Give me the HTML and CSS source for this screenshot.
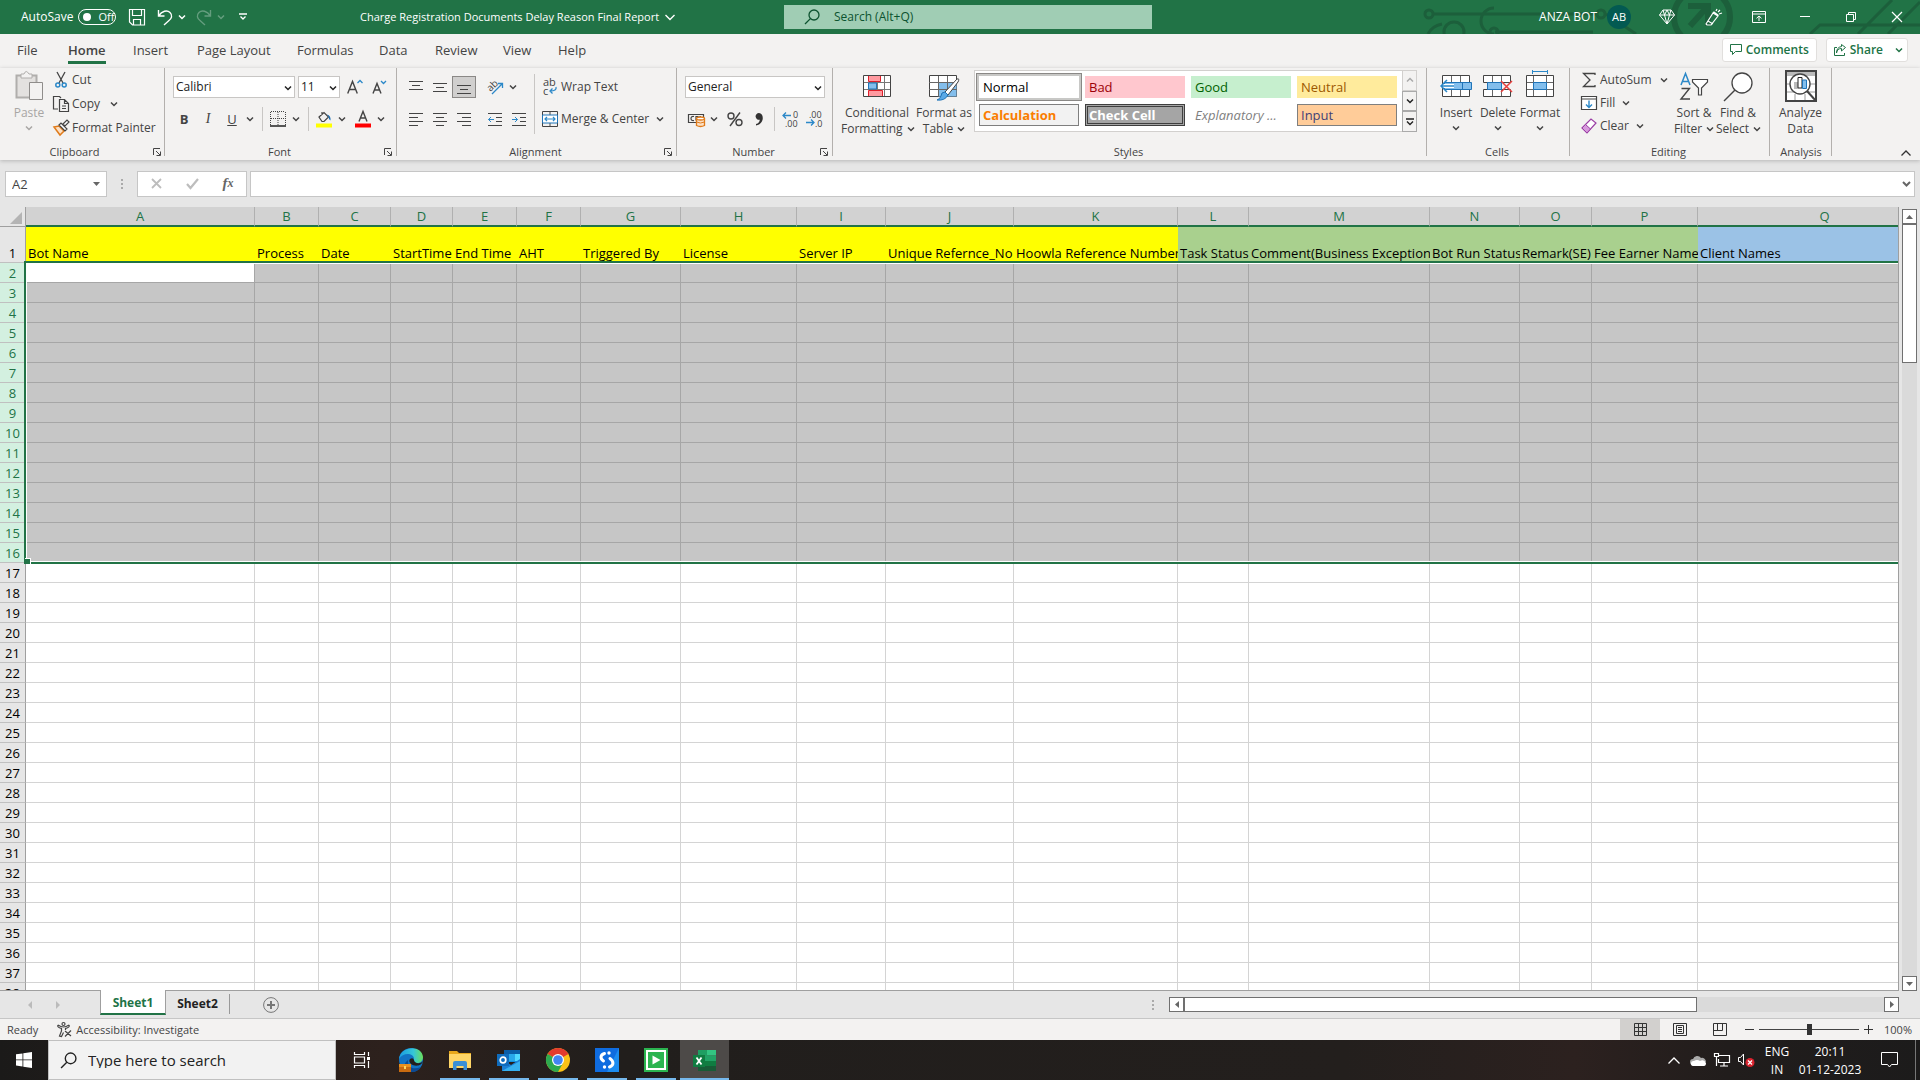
FILE: index.html
```html
<!DOCTYPE html>
<html lang="en">
<head>
<meta charset="utf-8">
<title>Charge Registration Documents Delay Reason Final Report - Excel</title>
<link rel="stylesheet" href="styles.css">
</head>
<body>
<svg class="sprite" aria-hidden="true">
  <symbol id="chev" viewBox="0 0 8 8"><path d="M1 2.5 4 5.5 7 2.5" fill="none" stroke="currentColor" stroke-width="1.5"/></symbol>
  <symbol id="launch" viewBox="0 0 8 8"><path d="M.5 7V.5H7M3 3l4 4M7.500 3.500v4h-4" fill="none" stroke="currentColor"/></symbol>
  <symbol id="lens" viewBox="0 0 16 16"><g fill="none" stroke="currentColor" stroke-width="1.300"><circle cx="10" cy="6" r="5"/><path d="M6.400 9.600 1 15"/></g></symbol>
</svg>

<header class="titlebar">
  <svg class="pattern" viewBox="0 0 500 34" aria-hidden="true"><g fill="none" stroke="#1c5f3b" stroke-width="3">
    <circle cx="9" cy="14" r="4"/><path d="M13 14h164M8 34q4-8 14-10M74 34a13 13 0 0 1 0-26M186 14l30 20M75 32h98"/>
    <circle cx="34" cy="32" r="10"/><circle cx="181" cy="14" r="4"/><circle cx="74" cy="32" r="4"/>
    <circle cx="282" cy="17" r="28" stroke-width="6"/><path d="M268 6h20v20M288 6l-18 20" stroke-width="6"/>
    <path d="M390 34l10-9h100M438 34l34-34M468 34l32-32"/></g></svg>
  <div class="quick">
    <label class="autosave">AutoSave <input type="checkbox"><span class="toggle"><i></i>Off</span></label>
    <button aria-label="Save"><svg width="16" height="17" viewBox="0 0 16 17"><path d="M.5.5h15v15.500h-12l-3-3zM3.500.5v6h9v-6M4.500 16v-5.500h7V16" fill="none" stroke="#fff" stroke-width="1.200"/></svg></button>
    <button aria-label="Undo"><svg width="16" height="17" viewBox="0 0 16 17"><path d="M1.500 1v6h6M1.500 7C5 2 10 .5 13 3.500s1.500 6-1 8L7 16" fill="none" stroke="#fff" stroke-width="1.400"/></svg></button>
    <button class="mini" aria-label="Undo list"><svg class="chev"><use href="#chev"/></svg></button>
    <button class="dim" aria-label="Redo"><svg width="16" height="17" viewBox="0 0 16 17"><path d="M14.500 1v6h-6M14.500 7C11 2 6 .5 3 3.500s-1.500 6 1 8L9 16" fill="none" stroke="#fff" stroke-width="1.400"/></svg></button>
    <button class="mini dim" aria-label="Redo list"><svg class="chev"><use href="#chev"/></svg></button>
    <button aria-label="Customize toolbar"><svg width="8" height="8" viewBox="0 0 8 8"><path d="M0 1h8M1.500 3.500 4 6l2.500-2.500" fill="none" stroke="#fff" stroke-width="1.300"/></svg></button>
  </div>
  <button class="doc">Charge Registration Documents Delay Reason Final Report <svg width="10" height="8" viewBox="0 0 10 8"><path d="M.5 2 5 6.500 9.500 2" fill="none" stroke="#fff" stroke-width="1.400"/></svg></button>
  <label class="search"><svg width="16" height="16"><use href="#lens"/></svg><input type="text" placeholder="Search (Alt+Q)" aria-label="Search"></label>
  <div class="account">
    <span>ANZA BOT</span><span class="avatar">AB</span>
    <button aria-label="Premium"><svg width="16" height="16" viewBox="0 0 16 16"><path d="M4 1h8l3.500 5L8 15 .5 6zM.5 6h15M4 1l1.500 5L8 15l2.500-9L12 1M5.500 6 8 1l2.500 5" fill="none" stroke="#fff"/></svg></button>
    <button aria-label="What's new"><svg width="17" height="17" viewBox="0 0 17 17"><path d="M1 15 8 4l5 3-7 9H2zM8 4l1-1 4 3v1M3 12l5 3M11 2l1-2M13 3l2-2M14 5l3-1" fill="none" stroke="#fff" stroke-width="1.200"/></svg></button>
    <button aria-label="Ribbon display"><svg width="14" height="12" viewBox="0 0 14 12"><path d="M.5.500h13v11H.5zM.5 3h13M7 10V5M4.500 7.300 7 5l2.500 2.300" fill="none" stroke="#fff"/></svg></button>
    <button aria-label="Minimize"><svg width="10" height="10" viewBox="0 0 10 10"><path d="M0 4.500h10" stroke="#fff"/></svg></button>
    <button aria-label="Restore"><svg width="10" height="10" viewBox="0 0 10 10"><path d="M.5 2.500h7v7h-7zM2.500 2.500v-2h7v7h-2" fill="none" stroke="#fff"/></svg></button>
    <button aria-label="Close"><svg width="10" height="10" viewBox="0 0 10 10"><path d="M0 0l10 10M10 0 0 10" stroke="#fff" stroke-width="1.200"/></svg></button>
  </div>
</header>

<nav class="tabs">
  <div class="tablist"><a href="#file">File</a><a href="#home" class="on">Home</a><a href="#insert">Insert</a><a href="#layout">Page Layout</a><a href="#formulas">Formulas</a><a href="#data">Data</a><a href="#review">Review</a><a href="#view">View</a><a href="#help">Help</a></div>
  <button class="pill"><svg width="12" height="11" viewBox="0 0 12 11"><path d="M.5.500h11v7h-6l-3 3v-3h-2z" fill="none" stroke="currentColor"/></svg>Comments</button>
  <button class="pill"><svg width="12" height="12" viewBox="0 0 12 12"><path d="M3 3.500H.5v8h10V9M2.500 9c.5-3 2-4.500 5-4.500V7l4-3.500L7.500.5v2C4 3 2.500 5.500 2.500 9z" fill="none" stroke="currentColor"/></svg>Share<svg class="chev"><use href="#chev"/></svg></button>
</nav>

<section class="ribbon">
  <div class="group g-clip">
    <div class="body">
      <button class="big dim2"><svg width="28" height="32" viewBox="0 0 28 32"><path d="M1.500 5.500h20v22h-20z" fill="#e3e1df" stroke="#b0aeac" stroke-width="2"/><path d="M6 8V4h3q2-5 5 0h3v4z" fill="#f3f2f1" stroke="#b0aeac"/><path d="M14.500 12.500h13v17h-13z" fill="#f3f2f1" stroke="#8f8d8b"/></svg>Paste<svg class="chev"><use href="#chev"/></svg></button>
      <div class="stack">
        <button><svg width="16" height="16" viewBox="0 0 16 16"><path d="M4 0l6 11M12 0 6 11" stroke="#444" stroke-width="1.300"/><g fill="none" stroke="#2b88c8" stroke-width="1.500"><circle cx="4.800" cy="13" r="2"/><circle cx="11.200" cy="13" r="2"/></g></svg>Cut</button>
        <button><svg width="16" height="16" viewBox="0 0 16 16"><path d="M5 13H.5V.5h6L8 2M6.500 3.500h5l4 4v8h-9zM11.500 3.500v4h4M9 10h4M9 12.500h4" fill="none" stroke="#444" stroke-width="1.200"/></svg>Copy<svg class="chev far"><use href="#chev"/></svg></button>
        <button><svg width="16" height="16" viewBox="0 0 16 16"><path d="M1 7l5-1 5 5-4 4z" fill="#fbe0c6" stroke="#e07b1a" stroke-width="1.500"/><path d="M6 5l2-2 6 6-2 2zM10 4l4-4 2 2-4 4z" fill="#fff" stroke="#444" stroke-width="1.200"/></svg>Format Painter</button>
      </div>
    </div>
    <div class="foot"><span>Clipboard</span><button aria-label="Clipboard settings"><svg class="chev"><use href="#launch"/></svg></button></div>
  </div>

  <div class="group g-font">
    <div class="rows">
      <div class="line"><div class="sel w-font"><select aria-label="Font"><option>Calibri</option></select><svg class="chev"><use href="#chev"/></svg></div><div class="sel w-size"><select aria-label="Font size"><option>11</option></select><svg class="chev"><use href="#chev"/></svg></div>
        <button class="t grow" aria-label="Increase font size"><svg width="16" height="16" viewBox="0 0 16 16"><path d="M.7 14.500 5.500 2.500l4.800 12M2.400 10.500h6.300" fill="none" stroke="#444" stroke-width="1.400"/><path d="M10.500 4 13 1.500 15.500 4" fill="none" stroke="#2b88c8" stroke-width="1.300"/></svg></button>
        <button class="t" aria-label="Decrease font size"><svg width="16" height="16" viewBox="0 0 16 16"><path d="M2 14.500 6 4.500l4 10M3.500 11h5" fill="none" stroke="#444" stroke-width="1.400"/><path d="M10 2l2.500 2.500L15 2" fill="none" stroke="#2b88c8" stroke-width="1.300"/></svg></button></div>
      <div class="line r2"><button class="t b">B</button><button class="t i">I</button><button class="t u">U</button><button class="c"><svg class="chev"><use href="#chev"/></svg></button><hr>
        <button class="t" aria-label="Borders"><svg width="16" height="16" viewBox="0 0 16 16"><path d="M1 .5h14M.5 1v13M15.500 1v13M1 7.500h14M8 1v13" stroke="#444" stroke-dasharray="1 1" fill="none"/><path d="M0 15h16" stroke="#222" stroke-width="1.500"/></svg></button><button class="c"><svg class="chev"><use href="#chev"/></svg></button><hr>
        <button class="t" aria-label="Fill color"><svg width="16" height="17" viewBox="0 0 16 17"><path d="M0 12.500h16v4H0z" fill="#ff0"/><path d="M3 6l5-4.500L12.500 6 8 10.500H6zM6 4V1" fill="none" stroke="#444" stroke-width="1.200"/><path d="M11 3.500q4 1 3.500 6-2-1-2-4z" fill="#1b6fb5"/></svg></button><button class="c"><svg class="chev"><use href="#chev"/></svg></button>
        <button class="t near" aria-label="Font color"><svg width="16" height="17" viewBox="0 0 16 17"><path d="M0 12.500h16v4H0z" fill="#f00"/><path d="M4 10.500 8 .5l4 10M5.500 7h5" fill="none" stroke="#444" stroke-width="1.400"/></svg></button><button class="c"><svg class="chev"><use href="#chev"/></svg></button></div>
    </div>
    <div class="foot"><span>Font</span><button aria-label="Font settings"><svg class="chev"><use href="#launch"/></svg></button></div>
  </div>

  <div class="group g-align">
    <div class="body">
      <div class="rows al">
        <div class="line"><button class="t" aria-label="Top align"><svg class="ic" viewBox="0 0 16 16"><path d="M1 2.500h14M4 6.500h8M1 10.500h14"/></svg></button><button class="t" aria-label="Middle align"><svg class="ic" viewBox="0 0 16 16"><path d="M1 4.500h14M4 8.500h8M1 12.500h14"/></svg></button><button class="t pressed" aria-label="Bottom align"><svg class="ic" viewBox="0 0 16 16"><path d="M1 6.500h14M4 10.500h8M1 14.500h14"/></svg></button>
          <button class="t gap7" aria-label="Orientation"><svg width="16" height="16" viewBox="0 0 16 16"><text x="-1" y="10" transform="rotate(-45 5 6)" font-size="10" fill="#444">ab</text><path d="M5 15 15 5M11 4.500h4.500V9" fill="none" stroke="#2b88c8" stroke-width="1.300"/></svg></button><button class="c"><svg class="chev"><use href="#chev"/></svg></button></div>
        <div class="line r2"><button class="t" aria-label="Align left"><svg class="ic" viewBox="0 0 16 16"><path d="M1 2.500h14M1 6.500h9M1 10.500h14M1 14.500h9"/></svg></button><button class="t" aria-label="Center"><svg class="ic" viewBox="0 0 16 16"><path d="M1 2.500h14M4 6.500h8M1 10.500h14M4 14.500h8"/></svg></button><button class="t" aria-label="Align right"><svg class="ic" viewBox="0 0 16 16"><path d="M1 2.500h14M6 6.500h9M1 10.500h14M6 14.500h9"/></svg></button>
          <button class="t gap7" aria-label="Decrease indent"><svg class="ic" viewBox="0 0 16 16"><path d="M1 2.500h14M9 6.500h6M9 10.500h6M1 14.500h14"/><path d="M7 8.500H1.500M4 6 1.500 8.500 4 11" stroke="#2b88c8"/></svg></button><button class="t" aria-label="Increase indent"><svg class="ic" viewBox="0 0 16 16"><path d="M1 2.500h14M9 6.500h6M9 10.500h6M1 14.500h14"/><path d="M1 8.500h5.500M4 6l2.500 2.500L4 11" stroke="#2b88c8"/></svg></button></div>
      </div>
      <hr class="tall">
      <div class="rows wr">
        <div class="line"><button class="w"><svg width="16" height="16" viewBox="0 0 16 16"><text x="1" y="7" font-size="11" fill="#444">ab</text><text x="1" y="16" font-size="11" fill="#444">c</text><path d="M14 8q1 4-6 4M10.500 9.500 8 12l2.500 2.500" fill="none" stroke="#2b88c8" stroke-width="1.300"/></svg>Wrap Text</button></div>
        <div class="line r2"><button class="w"><svg width="16" height="16" viewBox="0 0 16 16"><path d="M.5.500h15v15H.5zM8 .5V4M8 12v3.500" fill="none" stroke="#444"/><path d="M.5 4h15v8H.5z" fill="#fff" stroke="#1f74b8"/><path d="M3 8h10M5 6 3 8l2 2M11 6l2 2-2 2" fill="none" stroke="#2b88c8" stroke-width="1.200"/></svg>Merge &amp; Center</button><button class="c"><svg class="chev"><use href="#chev"/></svg></button></div>
      </div>
    </div>
    <div class="foot"><span>Alignment</span><button aria-label="Alignment settings"><svg class="chev"><use href="#launch"/></svg></button></div>
  </div>

  <div class="group g-num">
    <div class="rows">
      <div class="line"><div class="sel w-num"><select aria-label="Number format"><option>General</option></select><svg class="chev"><use href="#chev"/></svg></div></div>
      <div class="line r2"><button class="t" aria-label="Accounting format"><svg width="17" height="16" viewBox="0 0 17 16"><path d="M.5 3.500h15v8H.5zM6 5.500q-3-.5-3 2t3 2M8 9.500v-4h2v2H8M13 5.500h-1v3" fill="none" stroke="#444" stroke-width="1.200"/><path d="M8.500 7.500v7q4 2 8 0v-7" fill="#fbe0c6" stroke="#e07b1a" stroke-width="1.300"/><ellipse cx="12.500" cy="7.500" rx="4" ry="1.500" fill="#fff" stroke="#e07b1a" stroke-width="1.300"/><path d="M8.500 11q4 2 8 0" fill="none" stroke="#e07b1a"/></svg></button><button class="c"><svg class="chev"><use href="#chev"/></svg></button>
        <button class="t pct" aria-label="Percent"><svg width="16" height="16" viewBox="0 0 16 16"><g fill="none" stroke="#444" stroke-width="1.400"><circle cx="4" cy="5" r="3"/><circle cx="12" cy="11.500" r="3"/><path d="M13 1.500 3 15"/></g></svg></button><button class="t" aria-label="Comma"><svg width="16" height="16" viewBox="0 0 16 16"><path d="M8 2a3.400 3.400 0 1 0 .8 6.700Q8.500 12 5 13v1.500c9-2 8-12.500 3-12.500z" fill="#333"/></svg></button><hr>
        <button class="t" aria-label="Increase decimal"><svg width="16" height="16" viewBox="0 0 16 16"><path d="M9 4.500H1M4 1.500l-3 3 3 3" fill="none" stroke="#2b88c8" stroke-width="1.300"/><text x="11" y="7" font-size="9" fill="#444">0</text><text x="3" y="16" font-size="9" fill="#444">.00</text></svg></button><button class="t" aria-label="Decrease decimal"><svg width="16" height="16" viewBox="0 0 16 16"><path d="M0 11.500h8M5 8.500l3 3-3 3" fill="none" stroke="#2b88c8" stroke-width="1.300"/><text x="3" y="7" font-size="9" fill="#444">.00</text><text x="9" y="16" font-size="9" fill="#444">.0</text></svg></button></div>
    </div>
    <div class="foot"><span>Number</span><button aria-label="Number settings"><svg class="chev"><use href="#launch"/></svg></button></div>
  </div>

  <div class="group g-sty">
    <div class="body">
      <button class="big"><svg width="28" height="32" viewBox="0 2 28 32"><path d="M.5 7.500h27v21H.5z" fill="#fff"/><path d="M0 14.500h28M0 21.500h28M7.500 8v20M14.500 8v20M21.500 8v20" stroke="#777"/><path d="M5.500 7.500h12v6h-12zM5.500 22.500h14v6h-14z" fill="#ff9aa0" stroke="#e0202b"/><path d="M5.500 15h8v6h-8z" fill="#83beec" stroke="#1f74b8"/><path d="M.5 7.500h27v21H.5z" fill="none" stroke="#444"/></svg>Conditional<br>Formatting<svg class="chev in"><use href="#chev"/></svg></button>
      <button class="big fmt"><svg width="30" height="32" viewBox="0 2 30 32"><path d="M.5 7.500h27v21H.5z" fill="#fff" stroke="#444"/><path d="M9.500 14.500h18v14h-18z" fill="#83beec"/><path d="M0 14.500h28M0 21.500h28M9.500 8v20M18.500 8v20" stroke="#666"/><path d="M16 24 28 11q3-1 1 3L19 27z" fill="#fff" stroke="#444"/><path d="M8 32q8 1 11-5l-3-3q-4 0-4 4-1 3-4 4z" fill="#5aa9e6" stroke="#1f74b8"/></svg>Format as<br>Table<svg class="chev in"><use href="#chev"/></svg></button>
      <div class="gallery">
        <div class="cells"><button class="s normal">Normal</button><button class="s bad">Bad</button><button class="s good">Good</button><button class="s neutral">Neutral</button><button class="s calc">Calculation</button><button class="s check">Check Cell</button><button class="s expl">Explanatory ...</button><button class="s inp">Input</button></div>
        <div class="gscroll"><button class="off" aria-label="Scroll up"><svg class="chev flip"><use href="#chev"/></svg></button><button aria-label="Scroll down"><svg class="chev"><use href="#chev"/></svg></button><button aria-label="More styles"><svg width="8" height="8" viewBox="0 0 8 8"><path d="M0 1h8M1 3.500l3 3 3-3" fill="none" stroke="#222" stroke-width="1.400"/></svg></button></div>
      </div>
    </div>
    <div class="foot"><span>Styles</span></div>
  </div>

  <div class="group g-cells">
    <div class="body">
      <button class="big"><svg width="32" height="32" viewBox="0 2 32 32"><path d="M2.500 7.500h27v21h-27z" fill="#fff" stroke="#444"/><path d="M11.500 8v20M20.500 8v20" stroke="#666"/><path d="M4.500 14.500h27v7h-27z" fill="#83beec" stroke="#1f74b8"/><path d="M22.500 14v7" stroke="#1f74b8"/><path d="M0 18h14" stroke="#fff" stroke-width="4"/><path d="M14 18H1M7 12l-6 6 6 6" fill="none" stroke="#2b88c8" stroke-width="1.500"/></svg>Insert<svg class="chev"><use href="#chev"/></svg></button>
      <button class="big"><svg width="30" height="32" viewBox="0 2 30 32"><path d="M.5 14.500v-7h27v7zM.5 21.500v7h27v-7z" fill="#fff" stroke="#444"/><path d="M9.500 8v6M18.500 8v6M9.500 22v6M18.500 22v6" stroke="#666"/><path d="M4.500 14.500h14v7h-14z" fill="#83beec" stroke="#1f74b8"/><path d="M18 13l11 11M29 13 18 24" stroke="#e8403f" stroke-width="1.500"/></svg>Delete<svg class="chev"><use href="#chev"/></svg></button>
      <button class="big"><svg width="28" height="32" viewBox="0 2 28 32"><path d="M.5 7.500h27v21H.5z" fill="#fff"/><path d="M0 14.500h28M0 21.500h28M7.500 8v20M20.500 8v20" stroke="#666"/><path d="M7.500 14.500h13v7h-13z" fill="#83beec" stroke="#1f74b8"/><path d="M.5 7.500h27v21H.5z" fill="none" stroke="#444"/><path d="M6.500 2v4M21.500 2v4M7 3.500h14" stroke="#2b88c8"/></svg>Format<svg class="chev"><use href="#chev"/></svg></button>
    </div>
    <div class="foot"><span>Cells</span></div>
  </div>

  <div class="group g-edit">
    <div class="body">
      <div class="stack">
        <button><svg width="16" height="16" viewBox="0 0 16 16"><path d="M14 3V1.500H2.500L9 8l-6.500 6.500H14V13" fill="none" stroke="#444" stroke-width="1.300"/></svg>AutoSum<svg class="chev far"><use href="#chev"/></svg></button>
        <button><svg width="16" height="16" viewBox="0 0 16 16"><path d="M.5 1.500h15v13H.5zM.5 4h15" fill="#fff" stroke="#444" stroke-width="1.200"/><path d="M8 5.500v7M5 9.500l3 3 3-3" fill="none" stroke="#2b88c8" stroke-width="1.400"/></svg>Fill<svg class="chev in"><use href="#chev"/></svg></button>
        <button><svg width="16" height="16" viewBox="0 0 16 16"><path d="M1 10 10 1l5 4-9 10z" fill="#fff" stroke="#9b3fa5" stroke-width="1.200"/><path d="M1 10l3.500-3.500 5 4.500L6 15z" fill="#d79add" stroke="#9b3fa5"/></svg>Clear<svg class="chev in"><use href="#chev"/></svg></button>
      </div>
      <button class="big"><svg width="28" height="32" viewBox="0 0 28 32"><path d="M1 15 5.500 3.500 10 15M2.500 11.500h6" fill="none" stroke="#2b88c8" stroke-width="1.500"/><path d="M1.500 18.500h8L1 29h9" fill="none" stroke="#444" stroke-width="1.400"/><path d="M12.500 9.500h15v2.500l-6 6v7h-3v-7l-6-6z" fill="#fff" stroke="#444" stroke-width="1.200"/></svg>Sort &amp;<br>Filter<svg class="chev in"><use href="#chev"/></svg></button>
      <button class="big"><svg width="30" height="32" viewBox="0 1 30 32"><circle cx="19" cy="14" r="10" fill="#fff" stroke="#444" stroke-width="1.300"/><path d="M12 21 1 32" stroke="#444" stroke-width="1.500"/></svg>Find &amp;<br>Select<svg class="chev in"><use href="#chev"/></svg></button>
    </div>
    <div class="foot"><span>Editing</span></div>
  </div>

  <div class="group g-ana">
    <div class="body">
      <button class="big"><svg width="32" height="32" viewBox="0 0 32 32"><path d="M1 1h30v30H1z" fill="#fff" stroke="#444" stroke-width="2"/><path d="M2 2h28v4H2z" fill="#bbb"/><path d="M2 14h28M2 22h28M10 24v6M20 24v6" stroke="#999"/><circle cx="15" cy="14" r="10" fill="#fff" stroke="#444" stroke-width="1.400"/><path d="M22 21l9 10" stroke="#444" stroke-width="2"/><path d="M9 12h4v7H9z" fill="#bbb"/><path d="M13 7.500h4V18h-4z" fill="#fff" stroke="#222"/><path d="M17.500 10h4v8.500h-4z" fill="#83beec" stroke="#1f74b8"/></svg>Analyze<br>Data</button>
    </div>
    <div class="foot"><span>Analysis</span></div>
  </div>
  <button class="collapse" aria-label="Collapse ribbon"><svg width="10" height="8" viewBox="0 0 10 8"><path d="M.5 6.500 5 2l4.500 4.500" fill="none" stroke="#333" stroke-width="1.300"/></svg></button>
</section>

<section class="formula">
  <label class="namebox"><input type="text" value="A2" aria-label="Name box"><svg width="7" height="4" viewBox="0 0 7 4"><path d="M0 0h7L3.500 4z" fill="#666"/></svg></label>
  <span class="dots"><i></i><i></i><i></i></span>
  <div class="fx"><button aria-label="Cancel"><svg width="11" height="11" viewBox="0 0 11 11"><path d="M1 1l9 9M10 1l-9 9" stroke="#bdbdbd" stroke-width="1.800"/></svg></button><button aria-label="Enter"><svg width="13" height="11" viewBox="0 0 13 11"><path d="M1 6l3.500 4L12 1" fill="none" stroke="#bdbdbd" stroke-width="2.200"/></svg></button><button class="fn" aria-label="Insert function">f<small>x</small></button></div>
  <label class="finput"><input type="text" aria-label="Formula bar"><svg width="9" height="8" viewBox="0 0 9 8"><path d="M1 2l3.500 3.500L8 2" fill="none" stroke="#666" stroke-width="2"/></svg></label>
</section>

<main class="work">
  <div class="grid">
    <table>
      <colgroup><col class="c-n"><col class="c-a"><col class="c-b"><col class="c-c"><col class="c-d"><col class="c-b"><col class="c-b"><col class="c-g"><col class="c-h"><col class="c-i"><col class="c-j"><col class="c-k"><col class="c-l"><col class="c-m"><col class="c-o"><col class="c-c"><col class="c-p"><col class="c-q"></colgroup>
      <thead><tr><th class="corner"><svg width="12" height="12" viewBox="0 0 12 12"><path d="M12 0v12H0z" fill="#b4b4b4"/></svg></th><th>A</th><th>B</th><th>C</th><th>D</th><th>E</th><th>F</th><th>G</th><th>H</th><th>I</th><th>J</th><th>K</th><th>L</th><th>M</th><th>N</th><th>O</th><th>P</th><th>Q</th></tr></thead>
      <tbody id="rows"><tr class="head"><th>1</th><td>Bot Name</td><td>Process</td><td>Date</td><td>StartTime</td><td>End Time</td><td>AHT</td><td>Triggered By</td><td>License</td><td>Server IP</td><td>Unique Refernce_No</td><td>Hoowla Reference Number</td><td class="gr">Task Status</td><td class="gr">Comment(Business Exception)</td><td class="gr">Bot Run Status</td><td class="gr">Remark(SE)</td><td class="gr">Fee Earner Name</td><td class="bl">Client Names</td></tr></tbody>
    </table>
    <div class="selection"><i></i></div>
  </div>
  <div class="vscroll"><button aria-label="Scroll up"><svg width="7" height="4" viewBox="0 0 7 4"><path d="M0 4h7L3.500 0z" fill="#666"/></svg></button><span class="thumb"></span><span class="track"></span><button aria-label="Scroll down"><svg width="7" height="4" viewBox="0 0 7 4"><path d="M0 0h7L3.500 4z" fill="#666"/></svg></button></div>
</main>

<section class="sheets">
  <div class="nav"><button aria-label="Previous sheet"><svg width="4" height="8" viewBox="0 0 4 8"><path d="M4 0v8L0 4z" fill="#bbb"/></svg></button><button aria-label="Next sheet"><svg width="4" height="8" viewBox="0 0 4 8"><path d="M0 0v8l4-4z" fill="#bbb"/></svg></button></div>
  <button class="sheet on">Sheet1</button><button class="sheet">Sheet2</button>
  <button class="add" aria-label="New sheet"><svg width="16" height="16" viewBox="0 0 16 16"><circle cx="8" cy="8" r="7.400" fill="none" stroke="#777"/><path d="M8 4v8M4 8h8" stroke="#777" stroke-width="2"/></svg></button>
  <span class="dots push"><i></i><i></i><i></i></span>
  <div class="hscroll"><button aria-label="Scroll left"><svg width="4" height="7" viewBox="0 0 4 7"><path d="M4 0v7L0 3.500z" fill="#666"/></svg></button><span class="thumb"></span><span class="track"></span><button aria-label="Scroll right"><svg width="4" height="7" viewBox="0 0 4 7"><path d="M0 0v7l4-3.500z" fill="#666"/></svg></button></div>
</section>

<footer class="status">
  <span>Ready</span>
  <button class="acc"><svg width="15" height="15" viewBox="0 0 15 15"><g fill="none" stroke="#444" stroke-width="1.200"><circle cx="6.500" cy="2" r="1.500"/><path d="M1 3q-1 2 2 3l1.500.5V9L2.500 14l2 .5 2-4M12 3q1 2-2 3l-1.500.5V8M1 3q3 2 5.500 2T12 3M8 9l6 5M14 8.500l-6 6"/></g></svg>Accessibility: Investigate</button>
  <div class="views"><button class="on" aria-label="Normal"><svg width="13" height="13" viewBox="0 0 13 13"><path d="M.5.500h12v12H.5zM4.500 0v13M8.500 0v13M0 4.500h13M0 8.500h13" fill="none" stroke="#333"/></svg></button><button aria-label="Page layout"><svg width="14" height="13" viewBox="0 0 14 13"><path d="M.5.500h13v12H.5zM3.500 2.500h7v8h-7zM5 4.500h4M5 6.500h4M5 8.500h4" fill="none" stroke="#333"/></svg></button><button aria-label="Page break"><svg width="14" height="13" viewBox="0 0 14 13"><path d="M.5.500h13v12H.5zM4.500 0v7.500M9.500 0v7.500H.5" fill="none" stroke="#333"/></svg></button></div>
  <div class="zoom"><button aria-label="Zoom out"><svg width="9" height="9" viewBox="0 0 9 9"><path d="M0 4.500h9" stroke="#333"/></svg></button><input type="range" min="0" max="100" value="50" aria-label="Zoom"><button aria-label="Zoom in"><svg width="9" height="9" viewBox="0 0 9 9"><path d="M0 4.500h9M4.500 0v9" stroke="#333"/></svg></button><span>100%</span></div>
</footer>

<div class="taskbar">
  <button class="start" aria-label="Start"><svg width="16" height="16" viewBox="0 0 16 16"><path d="M0 2.300 6.500 1.400v6.100H0zM7.300 1.300 16 0v7.500H7.300zM0 8.300h6.500v6.200L0 13.600zM7.300 8.300H16V16l-8.700-1.300z" fill="#fff"/></svg></button>
  <label class="tsearch"><svg width="17" height="17"><use href="#lens"/></svg><input type="text" placeholder="Type here to search" aria-label="Search Windows"></label>
  <div class="apps">
    <button aria-label="Task view"><svg width="16" height="16" viewBox="0 0 16 16"><path d="M.5 0v2.500h10V0M.5 5h10v6H.5zM.5 16v-2.500h10V16M14.500 0v4M14.500 9v7" fill="none" stroke="#fff" stroke-width="1.200"/><path d="M13 5h3v3h-3z" fill="#fff"/></svg></button>
    <button aria-label="Edge"><svg width="24" height="24" viewBox="0 0 24 24"><defs><linearGradient id="eg" x1="0" x2="1"><stop offset="0" stop-color="#1a9be0"/><stop offset=".6" stop-color="#35c6d8"/><stop offset="1" stop-color="#6be05a"/></linearGradient></defs><circle cx="12" cy="12" r="12" fill="#1273c4"/><path d="M0 11C1-2 23-4 24 9c0 6-6 7-9 6-2-1 0-2 0-4 0-6-11-7-15 0z" fill="url(#eg)"/><path d="M9 12c-1 8 6 10 13 7-3 5-9 6-14 4-4-3-3-8 1-11z" fill="#0c4a94"/><path d="M11 11q3-2 4 1c0 3 6 5 9 1-1 5-8 6-12 3-2-2-2-4-1-5z" fill="#241f1d"/><path d="M0 16h12v8H0z" fill="#c96b10"/><path d="M0 16h12v3H0z" fill="#e8901e"/><path d="M5 18h2v3H5z" fill="#ffd25a"/></svg></button>
    <button class="run" aria-label="File Explorer"><svg width="22" height="20" viewBox="0 0 22 20"><path d="M0 1h8l2 2h12v15H0z" fill="#e8a81c"/><path d="M0 4h22v14H0z" fill="#ffd667"/><path d="M4 20v-7q0-2 2-2h10q2 0 2 2v7h-3.500v-4h-7v4z" fill="#3a8fd6"/></svg></button>
    <button class="run" aria-label="Outlook"><svg width="24" height="23" viewBox="0 0 24 23"><path d="M7 1h16v12H7z" fill="#1490df"/><path d="M12 4h6v8h-6z" fill="#28a8ea"/><path d="M18 4h5v8h-5z" fill="#50d9ff"/><path d="M7 1h16v4H7z" fill="#0a5ea8"/><path d="M5 10l9 6 9-6v12H5z" fill="#1b7fd4"/><path d="M5 22 23 12v10z" fill="#36b1f0"/><path d="M0 5h12v12H0z" fill="#0f6cbd"/><circle cx="6" cy="11" r="2.800" fill="none" stroke="#fff" stroke-width="1.700"/></svg></button>
    <button class="run" aria-label="Chrome"><svg width="24" height="24" viewBox="0 0 24 24"><circle cx="12" cy="12" r="12" fill="#fbc116"/><path d="M12 12 1.600 6A12 12 0 0 1 22.400 6z" fill="#e33b2e"/><path d="M12 12 1.600 6A12 12 0 0 0 12 24l5-9z" fill="#2da94f"/><circle cx="12" cy="12" r="6" fill="#fff"/><circle cx="12" cy="12" r="4.800" fill="#4285f4"/></svg></button>
    <button class="run" aria-label="Automation studio"><svg width="24" height="24" viewBox="0 0 24 24"><path d="M0 0h24v24H0z" fill="#0f6ce0"/><path d="M24 0v24H12z" fill="#1c8cf0"/><path d="M9.500 5.500C5 7 5 10.500 8.500 13M14.500 19c4.500-1.500 4.500-5.500.5-8.500" fill="none" stroke="#fff" stroke-width="3" stroke-linecap="round"/><circle cx="14" cy="5" r="1.700" fill="#fff"/><circle cx="9.500" cy="19" r="1.700" fill="#fff"/></svg></button>
    <button class="run" aria-label="Player"><svg width="24" height="24" viewBox="0 0 24 24"><path d="M0 0h24v24H0z" fill="#2bb450"/><path d="M3 3h18v18H3z" fill="none" stroke="#fff" stroke-width="2"/><path d="M8.500 7.500v9l8-4.500z" fill="#fff"/></svg></button>
    <button class="run active" aria-label="Excel"><svg width="24" height="23" viewBox="0 0 24 23"><path d="M5 1h9v21H5z" fill="#1f9e62"/><path d="M14 1h9v5.500h-9z" fill="#33c481"/><path d="M5 6.500h18V12H5z" fill="#21a366"/><path d="M5 12h18v5H5z" fill="#107c41"/><path d="M5 17h18v5H5z" fill="#185c37"/><path d="M0 6h12v12H0z" fill="#107c41"/><path d="M3.500 8.500l5 7M8.500 8.500l-5 7" stroke="#fff" stroke-width="1.800"/></svg></button>
  </div>
  <div class="tray">
    <button aria-label="Hidden icons"><svg width="12" height="7" viewBox="0 0 12 7"><path d="M.5 6.500 6 1l5.500 5.500" fill="none" stroke="#fff" stroke-width="1.300"/></svg></button>
    <button aria-label="OneDrive"><svg width="16" height="11" viewBox="0 0 16 11"><path d="M3 10a3 3 0 0 1 0-6 4.500 4.500 0 0 1 8-1 4 4 0 0 1 5 4z" fill="#aaa"/><path d="M3 11a2.500 2.500 0 0 1 1-5q3-2 6 0 4-2 6 2 0 3-2 3z" fill="#fff"/></svg></button>
    <button aria-label="Network"><svg width="16" height="14" viewBox="0 0 16 14"><path d="M5 2.500h10.500v7H4.500V6M10 9.500V13M6 13h8M.5.500h4v3h-4zM2.500 4v9" fill="none" stroke="#fff" stroke-width="1.200"/></svg></button>
    <button aria-label="Volume muted"><svg width="17" height="14" viewBox="0 0 17 14"><path d="M.5 4.500h2l3-3.500v11l-3-3.500h-2z" fill="none" stroke="#fff"/><circle cx="12" cy="9.500" r="4.500" fill="#d9232e"/><path d="M10 7.500l4 4M14 7.500l-4 4" stroke="#fff" stroke-width="1.200"/></svg></button>
    <button class="lang">ENG<br>IN</button><button class="clock">20:11<br>01-12-2023</button>
    <button class="note" aria-label="Notifications"><svg width="17" height="16" viewBox="0 0 17 16"><path d="M.5.500h16v12h-6L8.500 15l-2-2.500h-6z" fill="none" stroke="#fff"/></svg></button>
    <button class="peek" aria-label="Show desktop"></button>
  </div>
</div>
<script src="grid.js"></script>
</body>
</html>
```
FILE: grid.js
```js
// Fill the sheet with its empty rows; rows 2 to 16 are selected.
const body = document.getElementById('rows');
const columns = 17;
for (let n = 2; n <= 38; n++) {
  const row = body.insertRow();
  if (n <= 16) row.className = 'picked';
  const head = document.createElement('th');
  head.textContent = n;
  row.append(head);
  for (let c = 0; c < columns; c++) row.insertCell();
}
```
FILE: styles.css
```css
* { box-sizing: border-box; }
html, body { height: 100%; }
body { margin: 0; display: flex; flex-direction: column; min-height: 100vh; overflow: hidden; background: #e6e6e6; color: #444; font: 12px/16px "Open Sans", "Noto Sans", sans-serif; }
button, input, select { font: inherit; color: inherit; background: none; border: 0; padding: 0; margin: 0; border-radius: 0; outline: 0; }
button { display: flex; align-items: center; justify-content: center; white-space: nowrap; }
svg { flex: none; display: block; overflow: visible; }
a { color: inherit; text-decoration: none; }
.sprite { position: absolute; width: 0; height: 0; }
.chev { width: 8px; height: 8px; }
hr { width: 1px; border: 0; margin: 0 3px 0 6px; background: #c8c6c4; align-self: stretch; }

/* Title bar */
.titlebar { position: relative; flex: none; height: 34px; display: grid; grid-template-columns: 360px 424px minmax(200px, 368px) 1fr; align-items: center; background: #217346; color: #fff; }
.titlebar > * { position: relative; }
.titlebar > .pattern { position: absolute; right: 0; top: 0; width: 500px; height: 34px; overflow: hidden; }
.quick { display: flex; align-items: center; padding-left: 21px; }
.quick button { width: 28px; }
.quick button.mini { width: 14px; margin: 0 1px 0 -4px; }
.quick .dim { opacity: .3; }
.autosave { display: flex; align-items: center; width: 102px; gap: 5px; }
.autosave input { position: absolute; opacity: 0; }
.toggle { display: flex; align-items: center; gap: 7px; width: 38px; height: 16px; border: 1px solid #fff; border-radius: 8px; padding-left: 4px; font-size: 11px; line-height: 14px; }
.toggle i { width: 8px; height: 8px; border-radius: 50%; background: #fff; }
.doc { justify-content: flex-start; gap: 6px; font-size: 11px; }
.search { display: flex; align-items: center; gap: 14px; height: 24px; padding-left: 20px; background: #a0cdb4; color: #0d5330; }
.search input { flex: 1; }
input::placeholder { color: inherit; opacity: 1; }
.account { display: flex; align-items: center; justify-content: flex-end; }
.account button { width: 46px; height: 32px; }
.avatar { width: 24px; height: 24px; margin: 0 13px 0 10px; border-radius: 50%; background: #035a52; font-size: 11px; line-height: 24px; text-align: center; }

/* Ribbon tabs */
.tabs { flex: none; display: flex; align-items: center; height: 34px; padding: 0 12px 0 17px; gap: 9px; background: #f3f2f1; font-size: 13px; }
.tablist { flex: 1; display: grid; grid-template-columns: 51px 65px 64px 100px 82px 56px 68px 55px 60px; }
.tablist a { justify-self: start; line-height: 22px; border-bottom: 3px solid transparent; }
.tablist .on { border-color: #217346; font-weight: 600; }
.pill { height: 24px; gap: 4px; padding: 0 7px; margin-bottom: 3px; border: 1px solid #e1dfdd; border-radius: 3px; background: #fff; color: #217346; font-weight: 600; font-size: 12px; }
.pill .chev { margin-left: 8px; margin-right: -3px; }

/* Ribbon */
.ribbon { flex: none; display: flex; height: 92px; background: #f3f2f1; box-shadow: 0 1px 4px #b5b5b5; position: relative; }
.group { flex: none; display: flex; flex-direction: column; background: linear-gradient(#b3b0ad, #b3b0ad) right top / 1px 88px no-repeat; }
.body { flex: 1; display: flex; }
.foot { display: grid; grid-template-columns: 12px 1fr 12px; height: 16px; padding-right: 3px; font-size: 11px; line-height: 16px; }
.foot span { grid-column: 2; text-align: center; }
.g-clip { width: 165px; } .g-font { width: 232px; } .g-align { width: 280px; } .g-num { width: 156px; }
.g-sty { width: 594px; } .g-cells { width: 143px; } .g-edit { width: 200px; } .g-ana { width: 62px; }
.g-clip .foot { padding-right: 2px; margin-left: -14px; grid-template-columns: 12px 1fr 12px; padding-left: 0; }
.big { display: block; align-self: flex-start; padding-top: 2px; line-height: 16px; text-align: center; }
.big > svg:first-child { margin: 0 auto 3px; }
.big > .chev { margin: 3px auto 0; }
.big > .chev.in, .chev.in { display: inline-block; margin: 0 0 0 4px; }
.dim2 { color: #a8a6a4; }
.g-clip .big { width: 40px; margin-left: 9px; }
.g-clip .stack { margin-left: 4px; }
.stack { display: flex; flex-direction: column; }
.stack button { height: 24px; gap: 3px; justify-content: flex-start; }
.stack .far { margin-left: 7px; }
.rows { flex: 1; display: flex; flex-direction: column; gap: 9px; padding: 8px 0 0 7px; }
.line { display: flex; align-items: center; height: 22px; }
.line.r2 { height: 24px; }
.t { width: 24px; height: 22px; }
.c { width: 12px; height: 22px; }
.ic { width: 16px; height: 16px; fill: none; stroke: #444; }
.b { font-weight: 700; font-size: 13px; } .u { text-decoration: underline; font-size: 13px; } .i { font: italic 14px "Liberation Serif", serif; }
.near { margin-left: 3px; }
.grow { margin-left: 3px; }
.gap7 { margin-left: 7px; }
.sel { position: relative; height: 22px; border: 1px solid #c8c6c4; background: #fff; color: #222; }
.sel select { appearance: none; width: 100%; height: 20px; padding-left: 2px; }
.sel .chev { position: absolute; right: 2px; top: 7px; }
.w-font { width: 122px; margin: 0 3px 0 1px; } .w-size { width: 42px; } .w-num { width: 140px; margin-left: 1px; }
.pressed { background: #d0cfce; border: 1px solid #8a8886; }
.rows.al { flex: none; width: 137px; }
.tall { margin: 6px 0 10px; }
.wr { padding-left: 7px; }
.w { gap: 3px; height: 22px; }
.w + .c { margin-left: 5px; }
.pct { margin-left: 3px; }
.g-num hr { margin: 0 3px; }
.g-sty .big { width: 72px; margin-left: 8px; }
.g-sty .fmt { width: 60px; margin-left: 1px; }
.gallery { display: flex; flex: 1; height: 62px; margin: 2px 10px 0 0; border: 1px solid #d2d0ce; background: #fff; }
.cells { flex: 1; display: grid; grid-template-columns: repeat(4, 100px); gap: 6px; padding: 5px 4px; }
.s { height: 22px; justify-content: flex-start; padding-left: 4px; font-size: 13px; }
.normal { color: #000; outline: 2px solid #c8c8c6; box-shadow: 0 0 0 3px #8a8886; }
.bad { background: #ffc7ce; color: #9c0006; } .good { background: #c6efce; color: #006100; } .neutral { background: #ffeb9c; color: #9c5700; }
.calc { background: #f2f2f2; border: 1px solid #7f7f7f; color: #fa7d00; font-weight: 700; padding-left: 3px; }
.check { background: #a5a5a5; border: 3px double #3f3f3f; color: #fff; font-weight: 700; padding-left: 1px; }
.expl { color: #7f7f7f; font-style: italic; }
.inp { background: #ffcc99; border: 1px solid #7f7f7f; color: #3f3f76; padding-left: 3px; }
.gscroll { display: grid; grid-template-rows: repeat(3, 1fr); width: 15px; margin: -1px; }
.gscroll button { border: 1px solid #aaa; background: #f3f2f1; color: #222; }
.gscroll .off { border-color: #d2d0ce; color: #aaa; }
.flip { transform: rotate(180deg); }
.g-cells .big { width: 42px; }
.g-cells .body { padding-left: 8px; }
.g-edit .body { padding-left: 11px; }
.g-edit .stack { width: 87px; margin-right: 4px; }
.g-edit .stack button { height: 23px; }
.g-edit .stack .far { margin-left: auto; }
.g-edit .big { width: 44px; }
.g-ana .big { width: 61px; }
.g-ana .foot { grid-template-columns: 0 1fr 0; padding-right: 0; }
.collapse { margin-left: auto; align-self: flex-end; width: 28px; height: 14px; }

/* Formula bar */
.formula { flex: none; display: flex; align-items: center; height: 47px; padding: 0 5px; }
.formula label, .fx { display: flex; align-items: center; height: 26px; border: 1px solid #c6c6c6; background: #fff; }
.namebox { width: 102px; padding: 0 6px; }
.namebox input { flex: 1; width: 20px; font-size: 13px; }
.dots { display: flex; flex-direction: column; gap: 2px; width: 30px; align-items: center; }
.dots i { width: 2px; height: 2px; background: #aaa; }
.fx { width: 110px; }
.fx button { flex: 1; }
.fn { font: italic 700 15px "Liberation Serif", serif; color: #666; }
.fn small { font-size: 12px; }
.formula .finput { flex: 1; margin-left: 3px; padding-right: 3px; }
.finput input { flex: 1; }

/* Sheet */
.work { flex: 1 1 0; min-height: 0; display: flex; }
.grid { position: relative; flex: 1; min-width: 0; overflow: hidden; border-right: 1px solid #9f9f9f; border-bottom: 1px solid #9f9f9f; }
table { table-layout: fixed; width: 0; border-collapse: separate; border-spacing: 0; background: #fff; color: #000; font-size: 13px; line-height: 18px; }
.c-n { width: 26px; } .c-a { width: 229px; } .c-b { width: 64px; } .c-c { width: 72px; } .c-d { width: 62px; } .c-g { width: 100px; } .c-h { width: 116px; } .c-i { width: 89px; } .c-j { width: 128px; } .c-k { width: 164px; } .c-l { width: 71px; } .c-m { width: 181px; } .c-o { width: 90px; } .c-p { width: 106px; } .c-q { width: 254px; }
th, td { padding: 0; overflow: hidden; white-space: nowrap; font-weight: 400; border-right: 1px solid #d4d4d4; border-bottom: 1px solid #d4d4d4; }
thead th { height: 20px; line-height: 17px; background: #d2d2d2; color: #217346; border-right-color: #b0b0b0; border-bottom: 2px solid #217346; }
thead .corner { background: #e6e6e6; border-right-color: #9f9f9f; border-bottom: 1px solid #9f9f9f; }
.corner svg { margin: 3px 0 0 10px; }
tbody th { height: 20px; background: #e6e6e6; border-right-color: #9f9f9f; border-bottom-color: #c0c0c0; }
.head th, .head td { height: 36px; vertical-align: bottom; }
.head td { padding-left: 2px; background: #ff0; border-right: 0; border-bottom: 2px solid #217346; line-height: 16px; }
.head .gr { background: #a9d08e; }
.head .bl { background: #9bc2e6; }
.picked th { background: #d3f0e0; color: #217346; }
.picked td { background: #c6c6c6; border-color: #a6a6a6; }
.head + .picked td:nth-child(2) { background: #fff; }
.selection { position: absolute; left: 24px; right: 0; top: 54px; height: 303px; border: 2px solid #217346; border-right: 0; box-shadow: inset 1px 1px #fff, inset 0 -1px #fff; }
.selection i { position: absolute; left: -1px; bottom: -2px; width: 6px; height: 6px; background: #217346; border: solid #fff; border-width: 1px 1px 0 0; }

/* Scroll bars */
.vscroll { flex: none; display: flex; flex-direction: column; width: 21px; padding: 2px 3px 0; }
.vscroll button, .hscroll button { flex: none; width: 15px; height: 15px; border: 1px solid #707070; background: #fff; }
.thumb { border: 1px solid #707070; background: #fff; }
.track { flex: 1; background: #dadada; }
.vscroll .thumb { height: 139px; }
.hscroll { display: flex; flex: none; width: 730px; height: 15px; margin-right: 21px; }
.hscroll .thumb { width: 513px; }

/* Sheet tabs */
.sheets { flex: none; display: flex; align-items: center; height: 28px; border-bottom: 1px solid #c6c6c6; }
.nav { display: flex; width: 100px; padding-left: 16px; }
.nav button { width: 28px; }
.sheet { align-self: flex-start; width: 64px; height: 20px; margin-top: 3px; border-right: 1px solid #999; color: #222; font-weight: 700; }
.sheet.on { width: 66px; margin-top: -1px; height: 25px; padding-top: 2px; background: #fff; color: #217346; border: 1px solid #9f9f9f; border-width: 0 1px 2px; border-bottom-color: #217346; position: relative; }
.add { margin-left: 33px; }
.push { margin-left: auto; width: 32px; }

/* Status bar */
.status { flex: none; display: flex; align-items: center; height: 21px; padding: 0 8px 0 7px; background: #f3f2f1; font-size: 11px; }
.acc { gap: 4px; margin-left: 19px; }
.views { display: flex; align-self: stretch; margin-left: auto; }
.views button { width: 40px; }
.views .on { background: #d2d0ce; }
.zoom { display: flex; align-items: center; width: 172px; padding-left: 5px; }
.zoom input { appearance: none; width: 100px; height: 11px; margin: 0 5px 0 5px; background: linear-gradient(#444, #444) center / 100% 1px no-repeat; }
.zoom input::-webkit-slider-thumb { appearance: none; width: 5px; height: 11px; background: #333; }
.zoom span { margin-left: auto; }

/* Taskbar */
.taskbar { flex: none; display: flex; height: 40px; background: linear-gradient(90deg, #1b1a19, #2d211d 20%, #211e1c 32%, #231f1d 70%, #2c211f 82%, #211d1c 90%, #1c1b1b); color: #fff; }
.start { width: 48px; }
.tsearch { display: flex; align-items: center; gap: 11px; width: 288px; padding-left: 11px; border: 1px solid #c0c0c0; background: #f2f2f2; color: #222; font-size: 15px; }
.tsearch input { flex: 1; min-width: 0; }
.apps { display: flex; margin-left: 1px; }
.apps button { width: 49px; position: relative; }
.run::after { content: ""; position: absolute; left: 5px; right: 4px; bottom: 0; height: 2px; background: #76b9ed; }
.active { background: #4d4a48; }
.apps .active { width: 49px; }
.active::after { left: 0; right: 0; }
.tray { display: flex; margin-left: auto; }
.tray button { width: 24px; }
.tray .lang { width: 38px; line-height: 18px; display: block; padding-top: 2px; }
.tray .clock { width: 68px; line-height: 18px; display: block; padding-top: 2px; }
.tray .note { width: 51px; }
.tray .peek { width: 5px; border-left: 1px solid #777; }
```
